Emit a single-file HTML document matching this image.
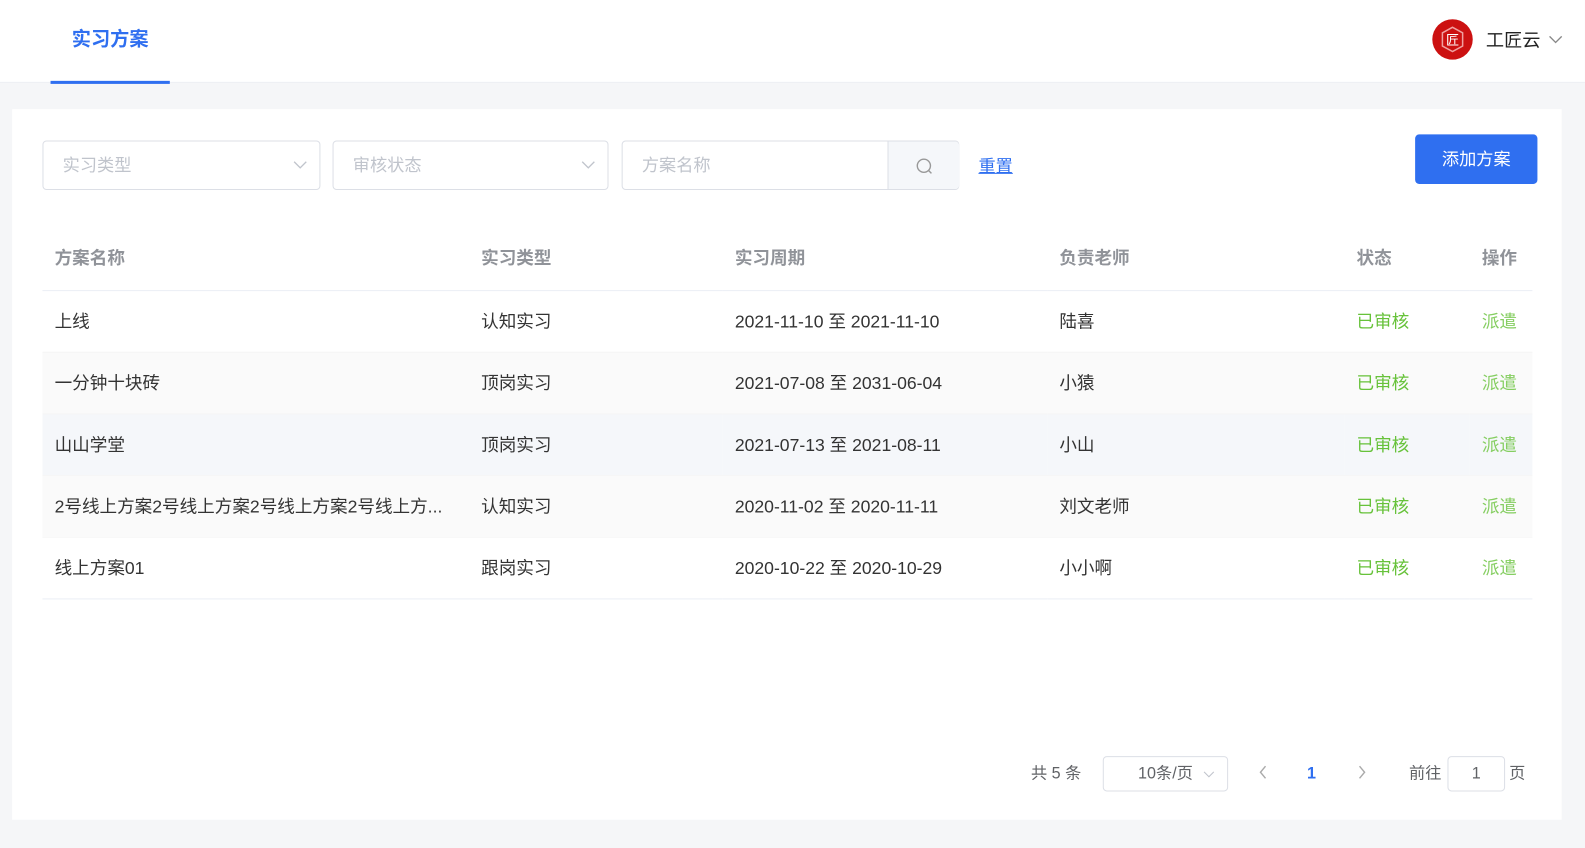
<!DOCTYPE html>
<html><head><meta charset="utf-8"><style>
*{box-sizing:border-box;margin:0;padding:0}
html,body{width:1585px;height:848px;overflow:hidden}
body{background:#f5f6f8;font-family:"Liberation Sans","Noto Sans CJK SC",sans-serif;color:#333}
#w{position:absolute;left:0;top:0;width:1568px;height:839px;transform:scale(1.0108);transform-origin:0 0}
.hdr{position:absolute;left:0;top:0;width:1568px;height:82px;background:#fff;border-bottom:1px solid #eceef2}
.tab{position:absolute;left:50px;top:0;width:118px;height:83px;border-bottom:3px solid #2f6ff0;color:#2f6ff0;font-weight:bold;font-size:19px;text-align:center;line-height:80px}
.user{position:absolute;left:1417px;top:19px;display:flex;align-items:center}
.logo{width:40px;height:40px;border-radius:50%;background:#cc1111;display:flex;align-items:center;justify-content:center}
.uname{margin-left:13px;font-size:18px;color:#222}
.card{position:absolute;left:12px;top:108px;width:1533px;height:703px;background:#fff}
.sel{position:absolute;top:31px;height:49px;border:1px solid #dcdfe6;border-radius:4px;color:#c0c4cc;font-size:17px;line-height:47px;padding-left:19px}
.sel svg{position:absolute;right:12px;top:18px}
.btn{position:absolute;left:1388px;top:25px;width:121px;height:49px;background:#2f6ff0;color:#fff;border-radius:4px;font-size:17px;text-align:center;line-height:49px}
table{position:absolute;left:30px;top:114px;width:1474px;border-collapse:collapse;font-size:17.4px}
th{height:65px;text-align:left;color:#909399;font-weight:bold;padding-left:12px;border-bottom:1px solid #ebeef5}
td{height:61px;padding-left:12px;border-bottom:1px solid #f5f5f5;color:#333}
tr.s td{background:#fafafa}tr.h td{background:#f5f7fa}
.g{color:#67c23a}.g2{color:#85ce61}
.pg{position:absolute;top:640px;font-size:16px;color:#606266}
.box{position:absolute;border:1px solid #dcdfe6;border-radius:4px;height:35px;top:640px;line-height:33px;text-align:center;font-size:16px;color:#606266}
</style></head><body><div id="w">
<div class="hdr"><div class="tab">实习方案</div>
<div class="user"><div class="logo"><svg width="30" height="30" viewBox="0 0 30 30"><polygon points="15,3 25,8.5 25,21.5 15,27 5,21.5 5,8.5" fill="none" stroke="#f0a0a0" stroke-width="1.5"/><text x="15" y="20" font-size="13" fill="#fff" text-anchor="middle" font-family="Noto Sans CJK SC">匠</text></svg></div><span class="uname">工匠云</span><svg style="margin-left:8px" width="14" height="10" viewBox="0 0 14 10"><path d="M1 2l6 6 6-6" fill="none" stroke="#888" stroke-width="1.3"/></svg></div></div>
<div class="card">
<div class="sel" style="left:30px;width:275px">实习类型<svg width="14" height="10" viewBox="0 0 14 10"><path d="M1 2l6 6 6-6" fill="none" stroke="#c0c4cc" stroke-width="1.3"/></svg></div>
<div class="sel" style="left:317px;width:273px">审核状态<svg width="14" height="10" viewBox="0 0 14 10"><path d="M1 2l6 6 6-6" fill="none" stroke="#c0c4cc" stroke-width="1.3"/></svg></div>
<div class="sel" style="left:603px;width:334px">方案名称<div style="position:absolute;left:262px;top:0;width:71px;height:47px;background:#f5f7fa;border-left:1px solid #dcdfe6;border-radius:0 4px 4px 0"><svg style="position:absolute;left:26px;top:15px" width="20" height="20" viewBox="0 0 20 20"><circle cx="9" cy="9" r="6.5" fill="none" stroke="#999" stroke-width="1.4"/><path d="M13.5 13.5l3 3" stroke="#999" stroke-width="1.4"/></svg></div></div>
<div style="position:absolute;left:956px;top:42px;color:#2f6ff0;font-size:17px;text-decoration:underline">重置</div>
<div class="btn">添加方案</div>
<table>
<colgroup><col style="width:422px"><col style="width:251px"><col style="width:321px"><col style="width:294px"><col style="width:124px"><col></colgroup>
<tr><th>方案名称</th><th>实习类型</th><th>实习周期</th><th>负责老师</th><th>状态</th><th>操作</th></tr>
<tr><td>上线</td><td>认知实习</td><td>2021-11-10 至 2021-11-10</td><td>陆喜</td><td class="g">已审核</td><td class="g2">派遣</td></tr>
<tr class="s"><td>一分钟十块砖</td><td>顶岗实习</td><td>2021-07-08 至 2031-06-04</td><td>小猿</td><td class="g">已审核</td><td class="g2">派遣</td></tr>
<tr class="h"><td>山山学堂</td><td>顶岗实习</td><td>2021-07-13 至 2021-08-11</td><td>小山</td><td class="g">已审核</td><td class="g2">派遣</td></tr>
<tr class="s"><td>2号线上方案2号线上方案2号线上方案2号线上方...</td><td>认知实习</td><td>2020-11-02 至 2020-11-11</td><td>刘文老师</td><td class="g">已审核</td><td class="g2">派遣</td></tr>
<tr><td style="border-bottom:1px solid #ebeef5">线上方案01</td><td style="border-bottom:1px solid #ebeef5">跟岗实习</td><td style="border-bottom:1px solid #ebeef5">2020-10-22 至 2020-10-29</td><td style="border-bottom:1px solid #ebeef5">小小啊</td><td class="g" style="border-bottom:1px solid #ebeef5">已审核</td><td class="g2" style="border-bottom:1px solid #ebeef5">派遣</td></tr>
</table>
<div class="pg" style="left:1008px;line-height:35px">共 5 条</div>
<div class="box" style="left:1079px;width:124px">10条/页<svg style="position:absolute;right:12px;top:13px" width="12" height="8" viewBox="0 0 14 10"><path d="M1 2l6 6 6-6" fill="none" stroke="#c0c4cc" stroke-width="1.3"/></svg></div>
<svg style="position:absolute;left:1233px;top:649px" width="10" height="14" viewBox="0 0 10 14"><path d="M7 1L2 7l5 6" fill="none" stroke="#aaa" stroke-width="1.4"/></svg>
<div class="pg" style="left:1281px;line-height:35px;color:#2f6ff0;font-weight:bold">1</div>
<svg style="position:absolute;left:1330px;top:649px" width="10" height="14" viewBox="0 0 10 14"><path d="M3 1l5 6-5 6" fill="none" stroke="#aaa" stroke-width="1.4"/></svg>
<div class="pg" style="left:1382px;line-height:35px">前往</div>
<div class="box" style="left:1420px;width:57px">1</div>
<div class="pg" style="left:1481px;line-height:35px">页</div>
</div>
</div></body></html>
